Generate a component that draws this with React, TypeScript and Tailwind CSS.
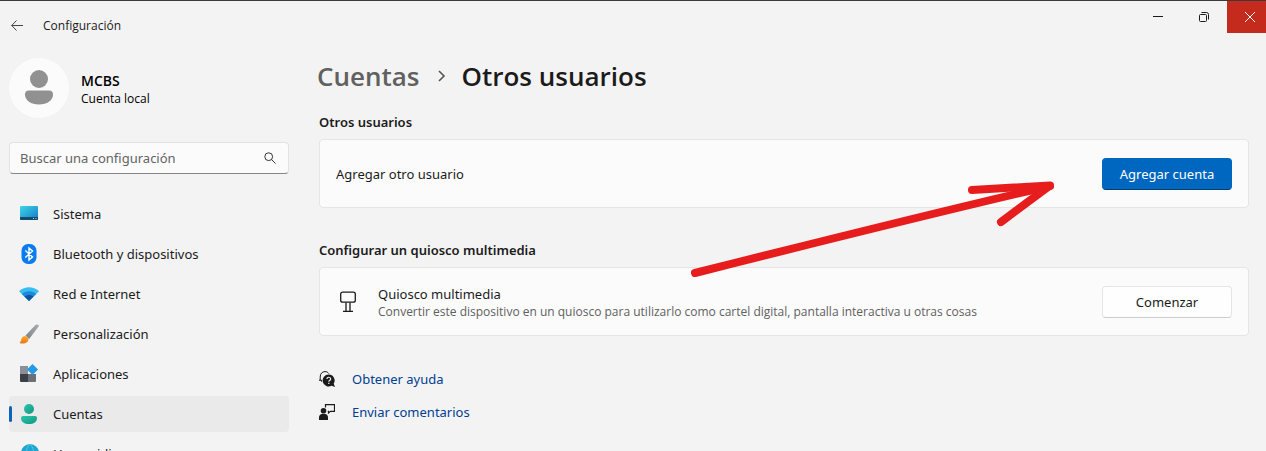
import type { ReactNode } from "react";

type NavItem = { label: string; icon: ReactNode; active?: boolean };

const SystemIcon = () => (
  <svg width="20" height="20" viewBox="0 0 20 20" aria-hidden="true">
    <defs>
      <linearGradient id="sys" x1="0" y1="0" x2="1" y2="1">
        <stop offset="0" stopColor="#3fd6e6" />
        <stop offset="1" stopColor="#1579c8" />
      </linearGradient>
    </defs>
    <rect x="1" y="2" width="18" height="14" rx="1" fill="url(#sys)" />
    <path d="M1 13h18v2a1 1 0 0 1-1 1H2a1 1 0 0 1-1-1z" fill="#124b70" />
    <path d="M14 14h1v1h-1zM16.500 14h1v1h-1z" fill="#9ed8ee" />
  </svg>
);

const BluetoothIcon = () => (
  <svg width="20" height="20" viewBox="0 0 20 20" aria-hidden="true">
    <rect x="2.500" width="15" height="20" rx="6.500" fill="#0a7cf0" />
    <path
      d="M6.300 6.500 13.500 13 10 16V4l3.500 3-7.200 6.500"
      fill="none"
      stroke="#fff"
      strokeWidth="1.400"
    />
  </svg>
);

const NetworkIcon = () => (
  <svg width="20" height="20" viewBox="0 0 20 20" aria-hidden="true">
    <path d="M0 7.200C5.500 1.800 14.500 1.800 20 7.200L10 17z" fill="#38bdf0" />
    <path d="M2.800 9.900C7 6.200 13 6.200 17.200 9.900L10 17z" fill="#1d88dc" />
    <path d="M5.500 12.500C8.200 10.400 11.800 10.400 14.500 12.500L10 17z" fill="#10549f" />
  </svg>
);

const BrushIcon = () => (
  <svg width="20" height="20" viewBox="0 0 20 20" aria-hidden="true">
    <defs>
      <linearGradient id="handle" x1="0" y1="1" x2="1" y2="0">
        <stop offset="0" stopColor="#7c8289" />
        <stop offset="1" stopColor="#a9adb2" />
      </linearGradient>
      <linearGradient id="tip" x1="0" y1="0" x2="0" y2="1">
        <stop offset="0" stopColor="#f9ad35" />
        <stop offset="1" stopColor="#ea7412" />
      </linearGradient>
    </defs>
    <path d="M6.500 11.500 16.200 1.200C17.400 0 20.400.300 19.600 2.600L10.200 15z" fill="url(#handle)" />
    <path
      d="M.300 18.700C2.500 18 1.800 14.500 3.500 12.900 5 11.500 7 11.600 8.300 12.800 9.800 14.200 9.900 16.300 8.500 17.800 6.500 20 2.500 20 .300 18.700z"
      fill="url(#tip)"
    />
  </svg>
);

const AppsIcon = () => (
  <svg width="20" height="20" viewBox="0 0 20 20" aria-hidden="true">
    <path d="M1 2h8v8H1z" fill="#8b9096" />
    <path d="M1 10h8v8H2a1 1 0 0 1-1-1z" fill="#3c4046" />
    <path d="M9 10h8v7a1 1 0 0 1-1 1H9z" fill="#6b7076" />
    <path d="m13.500 0 5.500 5.500-5.500 5.500L8 5.500z" fill="#2499e8" />
  </svg>
);

const AccountIcon = () => (
  <svg width="20" height="20" viewBox="0 0 20 20" aria-hidden="true">
    <defs>
      <linearGradient id="acc" x1="0" y1="0" x2="1" y2="1">
        <stop offset="0" stopColor="#2cc6a8" />
        <stop offset="1" stopColor="#119683" />
      </linearGradient>
    </defs>
    <circle cx="10" cy="5" r="5" fill="url(#acc)" />
    <path
      d="M4 12h12a2 2 0 0 1 2 2c0 4-3.500 6-8 6s-8-2-8-6a2 2 0 0 1 2-2z"
      fill="url(#acc)"
    />
  </svg>
);

const GlobeIcon = () => (
  <svg width="20" height="20" viewBox="0 0 20 20" aria-hidden="true">
    <circle cx="11" cy="9" r="9" fill="#1fa5cf" />
    <path
      d="M11 0c-5 5-5 13 0 18M11 0c5 5 5 13 0 18"
      fill="none"
      stroke="#4fcbe6"
      strokeWidth="1"
    />
  </svg>
);

const SearchIcon = () => (
  <svg width="12" height="12" viewBox="0 0 12 12" fill="none" stroke="#333" aria-hidden="true">
    <circle cx="4.700" cy="4.700" r="3.900" />
    <path d="m7.500 7.500 4 4" />
  </svg>
);

const KioskIcon = () => (
  <svg width="24" height="24" viewBox="0 0 24 24" fill="none" stroke="#1b1b1b" strokeWidth="1.300" aria-hidden="true">
    <rect x="4.700" y="2.200" width="14.600" height="10" rx="2" />
    <path d="M10 12.500v8.500M14 12.500v8.500M7 21.300h10" />
  </svg>
);

const HelpIcon = () => (
  <svg width="16" height="16" viewBox="0 0 16 16" aria-hidden="true">
    <path d="M1.200 9.500V6C1.200 2.500 3.300.600 6 .600c1.700 0 3 .700 3.900 2M0 9.200h2.500v1.500" fill="none" stroke="#1b1b1b" />
    <path d="M9.800 3.500a6 6 0 1 0 2.800 11.200l3.400 1.200-1.300-3.200A6 6 0 0 0 9.800 3.500z" fill="#1b1b1b" />
    <path d="M8 8c0-2.500 3.700-2.200 3.700 0 0 1.300-1.900 1.200-1.900 2.800M9.800 11.800v1.300" fill="none" stroke="#f3f3f3" strokeWidth="1.200" />
  </svg>
);

const FeedbackIcon = () => (
  <svg width="16" height="16" viewBox="0 0 16 16" aria-hidden="true">
    <circle cx="4.500" cy="6.700" r="2.800" fill="#1b1b1b" />
    <path d="M0 16v-2.500C0 11.200 1.500 10 3 10h3c1.700 0 3 1.300 3 3.500V16z" fill="#1b1b1b" />
    <path d="M6.500 3.500V.600h9v6.800h-4L9.500 9V7.400H8.800" fill="none" stroke="#1b1b1b" strokeWidth="1.200" />
  </svg>
);

const navItems: NavItem[] = [
  { label: "Sistema", icon: <SystemIcon /> },
  { label: "Bluetooth y dispositivos", icon: <BluetoothIcon /> },
  { label: "Red e Internet", icon: <NetworkIcon /> },
  { label: "Personalización", icon: <BrushIcon /> },
  { label: "Aplicaciones", icon: <AppsIcon /> },
  { label: "Cuentas", icon: <AccountIcon />, active: true },
  { label: "Hora e idioma", icon: <GlobeIcon /> },
];

function TitleBar() {
  return (
    <header className="flex h-8 shrink-0 items-start justify-between">
      <div className="flex items-center gap-[18px] pt-[15px] pl-[9px]">
        <button type="button" aria-label="Atrás" className="flex h-4 w-4 items-center justify-center">
          <svg width="12" height="12" viewBox="0 0 12 12" fill="none" stroke="#444" aria-hidden="true">
            <path d="M12 5.500H.700M5.500.500l-4.800 5 4.800 5" />
          </svg>
        </button>
        <span className="font-['Open_Sans',sans-serif] text-xs leading-5">Configuración</span>
      </div>
      <div className="flex h-8">
        <button type="button" aria-label="Minimizar" className="flex w-[46px] items-center justify-center">
          <svg width="10" height="10" viewBox="0 0 10 10" stroke="#1b1b1b" aria-hidden="true">
            <path d="M0 4.500h10" />
          </svg>
        </button>
        <button type="button" aria-label="Restaurar" className="flex w-[46px] items-center justify-center">
          <svg width="10" height="10" viewBox="0 0 10 10" fill="none" stroke="#1b1b1b" aria-hidden="true">
            <rect x=".500" y="2.500" width="7" height="7" rx="1" />
            <path d="M2.500.500h5a2 2 0 0 1 2 2v5" />
          </svg>
        </button>
        <button
          type="button"
          aria-label="Cerrar"
          className="flex w-[39px] items-center justify-center bg-[#c42b1c] pl-1.5"
        >
          <svg width="10" height="10" viewBox="0 0 10 10" stroke="#fff" aria-hidden="true">
            <path d="m0 0 10 10M10 0 0 10" />
          </svg>
        </button>
      </div>
    </header>
  );
}

function Sidebar() {
  return (
    <aside className="w-[280px] shrink-0">
      <div className="flex items-center gap-3">
        <div className="flex h-[60px] w-[60px] items-center justify-center rounded-full bg-[#fbfbfb]">
          <svg width="28" height="36" viewBox="0 0 28 36" fill="#919191" aria-hidden="true">
            <circle cx="14" cy="9" r="9" />
            <path d="M4 20.500h20a4 4 0 0 1 4 4c0 6-6 10-14 10s-14-4-14-10a4 4 0 0 1 4-4z" />
          </svg>
        </div>
        <div className="pt-0.5 font-['Open_Sans',sans-serif] text-black">
          <p className="text-sm leading-5 font-semibold">MCBS</p>
          <p className="text-xs leading-4">Cuenta local</p>
        </div>
      </div>

      <label className="mt-6 flex h-8 items-center rounded border border-[#e2e2e2] border-b-[#868686] bg-[#fbfbfb] pr-3 pl-2.5">
        <input
          type="text"
          aria-label="Buscar una configuración"
          placeholder="Buscar una configuración"
          className="min-w-0 flex-1 bg-transparent pt-0.5 outline-none placeholder:text-[#636363]"
        />
        <SearchIcon />
      </label>

      <nav className="mt-[22px]">
        <ul className="space-y-1">
          {navItems.map((item) => (
            <li key={item.label}>
              <a
                href="#"
                aria-current={item.active ? "page" : undefined}
                className={
                  item.active
                    ? "flex h-9 items-center rounded bg-[#eaeaea]"
                    : "flex h-9 items-center rounded"
                }
              >
                <span className={item.active ? "h-4 w-[3px] rounded-full bg-[#0f62b5]" : "w-[3px]"} />
                <span className="mr-3.5 ml-[7px]">{item.icon}</span>
                <span className="pt-0.5">{item.label}</span>
              </a>
            </li>
          ))}
        </ul>
      </nav>
    </aside>
  );
}

function Card({ title, children }: { title: string; children: ReactNode }) {
  return (
    <section>
      <h2 className="leading-5 font-semibold">{title}</h2>
      <div className="mt-[7px] flex min-h-[69px] items-center rounded border border-[#e5e5e5] bg-[#fbfbfb] px-4">
        {children}
      </div>
    </section>
  );
}

function ArrowMark() {
  return (
    <svg
      className="pointer-events-none absolute top-[173px] right-[206px]"
      width="370"
      height="110"
      viewBox="0 0 370 110"
      fill="none"
      stroke="#e71d1d"
      strokeWidth="8"
      strokeLinecap="round"
      strokeLinejoin="round"
      aria-hidden="true"
    >
      <path d="M5 99C120 70 235 41 360 12" />
      <path d="M282 16 360 11.500 311 48" />
    </svg>
  );
}

export default function App() {
  return (
    <div className="relative flex h-screen flex-col overflow-hidden border-t border-[#3b3939] bg-[#f3f3f3] font-['Noto_Sans','Open_Sans',sans-serif] text-[13px] text-[#1b1b1b]">
      <TitleBar />
      <div className="flex min-h-0 flex-1 gap-[30px] pt-[25px] pr-[17px] pl-[9px]">
        <Sidebar />
        <main className="min-w-0 flex-1">
          <h1 className="-ml-0.5 flex items-center font-['Open_Sans',sans-serif] text-[26px] leading-9 font-semibold">
            <a href="#" className="text-[#606060]">Cuentas</a>
            <svg className="mr-4 ml-[18px]" width="8" height="12" viewBox="0 0 8 12" fill="none" stroke="#555" strokeWidth="1.600" aria-hidden="true">
              <path d="m1 1 5 5-5 5" />
            </svg>
            <span>Otros usuarios</span>
          </h1>

          <div className="mt-[18px] space-y-8">
            <Card title="Otros usuarios">
              <span className="flex-1 pt-0.5">Agregar otro usuario</span>
              <button
                type="button"
                className="h-8 w-[130px] rounded border border-[#0067c0] border-b-[#003e73] bg-[#0067c0] pt-0.5 text-white"
              >
                Agregar cuenta
              </button>
            </Card>
            <Card title="Configurar un quiosco multimedia">
              <KioskIcon />
              <div className="ml-[18px] flex-1">
                <p className="leading-5">Quiosco multimedia</p>
                <p className="font-['Open_Sans',sans-serif] text-xs leading-4 text-[#606060]">
                  Convertir este dispositivo en un quiosco para utilizarlo como cartel digital, pantalla interactiva u otras cosas
                </p>
              </div>
              <button
                type="button"
                className="h-8 w-[130px] rounded border border-[#e5e5e5] border-b-[#cccccc] bg-[#fefefe] pt-0.5"
              >
                Comenzar
              </button>
            </Card>
          </div>

          <ul className="mt-[33px] space-y-[13px] text-[#003e92]">
            <li>
              <a href="#" className="flex items-center gap-[17px] leading-5">
                <HelpIcon />
                Obtener ayuda
              </a>
            </li>
            <li>
              <a href="#" className="flex items-center gap-[17px] leading-5">
                <FeedbackIcon />
                Enviar comentarios
              </a>
            </li>
          </ul>
        </main>
      </div>
      <ArrowMark />
    </div>
  );
}
